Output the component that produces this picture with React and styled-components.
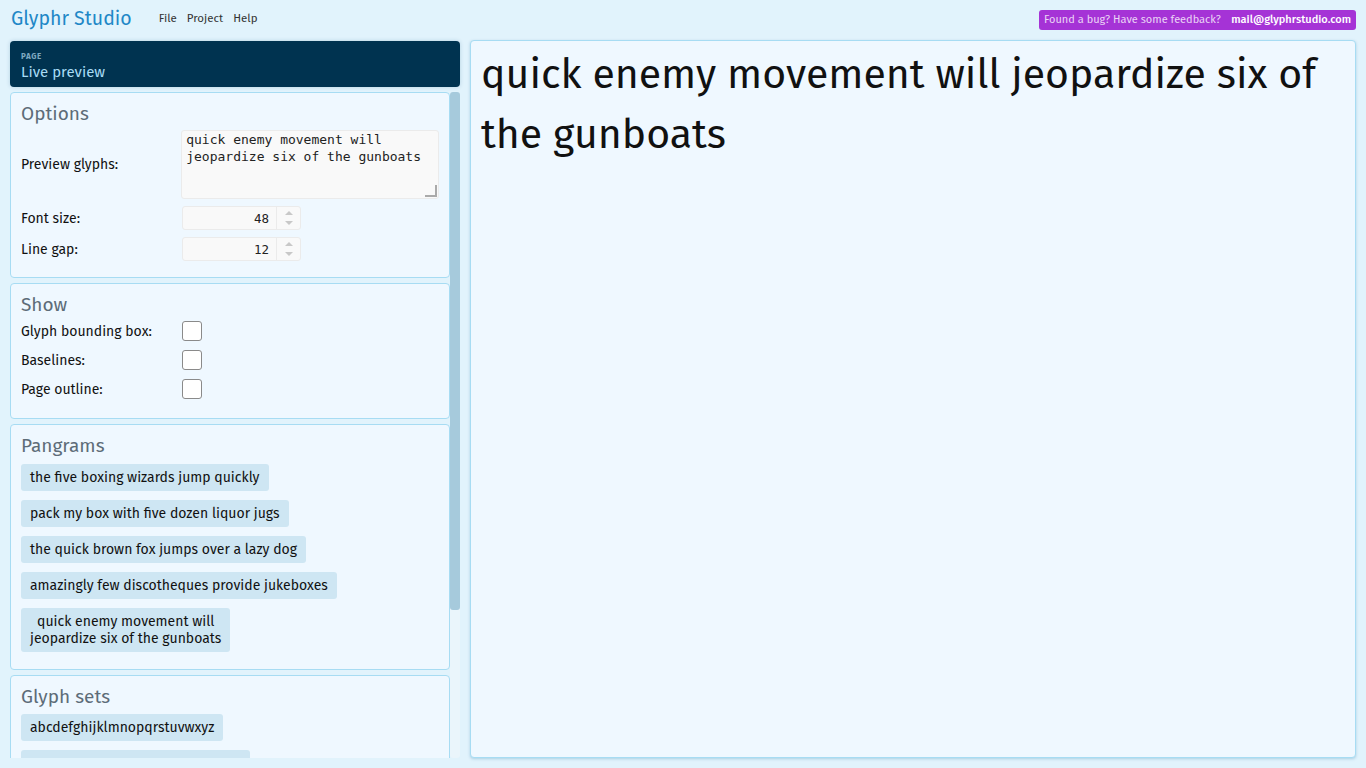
import React from "react";
import styled, { createGlobalStyle } from "styled-components";

const Global = createGlobalStyle`
  html, body { margin: 0; padding: 0; }
  body {
    background: #e1f3fc;
    font-family: "Fira Sans", "Lato", "Noto Sans", sans-serif;
    overflow: hidden;
  }
`;

const Page = styled.div`
  width: 1366px;
  height: 768px;
  display: flex;
  flex-direction: column;
  background: #e1f3fc;
`;

const TopBar = styled.div`
  height: 36px;
  display: flex;
  align-items: center;
  padding: 0 10px 0 11px;
  box-sizing: border-box;
`;

const Logo = styled.div`
  font-size: 19.5px;
  color: #1f88c7;
  margin-right: 27px;
`;

const MenuItem = styled.div`
  font-size: 11.5px;
  color: #333;
  margin-right: 10px;
`;

const Spacer = styled.div`
  flex: 1;
`;

const Feedback = styled.div`
  background: #a533d6;
  color: #ead5f5;
  font-size: 11px;
  line-height: 14px;
  border-radius: 3px;
  padding: 3px 5px;
  display: flex;
  gap: 8px;
  margin-top: 4px;
  width: 307px;
  justify-content: space-between;
`;

const Mail = styled.span`
  color: #fff;
  font-weight: 500;
`;

const Main = styled.div`
  flex: 1;
  display: flex;
  padding: 4px 10px 10px 10px;
  gap: 10px;
  min-height: 0;
`;

const LeftCol = styled.div`
  width: 450px;
  display: flex;
  flex-direction: column;
  gap: 5px;
  min-height: 0;
`;

const PageCard = styled.div`
  background: #003350;
  border-radius: 4px;
  height: 46px;
  box-sizing: border-box;
  padding: 11px 10px 0 11px;
  margin-top: 1px;
  flex-shrink: 0;
  box-shadow: 0 0 4px rgba(0, 80, 120, 0.2);
`;

const PageLabel = styled.div`
  font-size: 8px;
  line-height: 10px;
  font-weight: 700;
  letter-spacing: 0.6px;
  color: #7ea8c0;
`;

const PageTitle = styled.div`
  font-size: 15px;
  line-height: 18px;
  color: #a8dcf5;
  margin-top: 1px;
`;

const ScrollArea = styled.div`
  flex: 1;
  display: flex;
  min-height: 0;
  overflow: hidden;
`;

const Cards = styled.div`
  width: 440px;
  display: flex;
  flex-direction: column;
  gap: 5px;
`;

const Track = styled.div`
  width: 10px;
  background: #eaf5fb;
  border-radius: 3px;
  display: flex;
  flex-direction: column;
`;

const Thumb = styled.div`
  height: 518px;
  background: #a6cadc;
  border-radius: 3px;
`;

const Card = styled.div`
  background: #eff8ff;
  border: 1px solid #a7dcf3;
  border-radius: 4px;
  padding: ${(p) => p.$pt || 9}px 10px ${(p) => p.$pb || 15}px 10px;
  box-sizing: border-box;
  flex-shrink: 0;
`;

const CardTitle = styled.div`
  font-size: 19px;
  line-height: 23px;
  color: #5d6c78;
  margin-bottom: ${(p) => p.$mb || 6}px;
`;

const Row = styled.div`
  display: flex;
  align-items: center;
  margin-bottom: ${(p) => p.$mb || 0}px;
`;

const Label = styled.div`
  width: 161px;
  font-size: 14px;
  color: #111;
`;

const TextArea = styled.div`
  width: 259px;
  height: 69px;
  box-sizing: border-box;
  background: #f9f9f9;
  border: 1px solid #ebebeb;
  border-radius: 3px;
  padding: 0 4px;
  font-family: "DejaVu Sans Mono", monospace;
  font-size: 13px;
  line-height: 17px;
  color: #222;
  position: relative;
`;

const Grip = styled.div`
  position: absolute;
  right: 1px;
  bottom: 1px;
  width: 12px;
  height: 12px;
  border-right: 2px solid #aaa;
  border-bottom: 2px solid #aaa;
  box-sizing: border-box;
`;

const NumberBox = styled.div`
  width: 119px;
  height: 24px;
  box-sizing: border-box;
  background: #f9f9f9;
  border: 1px solid #ebebeb;
  border-radius: 3px;
  display: flex;
`;

const NumberVal = styled.div`
  flex: 1;
  text-align: right;
  padding-right: 7px;
  font-family: "DejaVu Sans Mono", monospace;
  font-size: 12.5px;
  line-height: 23px;
  color: #222;
`;

const Spin = styled.div`
  width: 23px;
  border-left: 1px solid #ebebeb;
  display: flex;
  flex-direction: column;
  align-items: center;
  justify-content: center;
  gap: 6px;
`;

const Tri = styled.div`
  width: 0;
  height: 0;
  border-left: 4px solid transparent;
  border-right: 4px solid transparent;
  ${(p) =>
    p.$up
      ? "border-bottom: 4px solid #c8c8c8;"
      : "border-top: 4px solid #c8c8c8;"}
`;

const Check = styled.div`
  width: 20px;
  height: 20px;
  box-sizing: border-box;
  border: 1px solid #8a8a8a;
  border-radius: 3px;
  background: #fff;
`;

const ChipList = styled.div`
  display: flex;
  flex-direction: column;
  align-items: flex-start;
  gap: 9px;
`;

const Chip = styled.div`
  background: #cee6f3;
  border-radius: 3px;
  padding: 5px 9px;
  font-size: 14px;
  line-height: 17px;
  color: #111;
  text-align: center;
  min-width: ${(p) => p.$minw || 0}px;
`;

const Preview = styled.div`
  flex: 1;
  background: #eff8ff;
  border: 1px solid #a7dcf3;
  border-radius: 4px;
  padding: 4px 10px;
  box-sizing: border-box;
  font-family: "Fira Sans", "Noto Sans", sans-serif;
  font-size: 41px;
  line-height: 60px;
  color: #111;
  box-shadow: 0 1px 3px rgba(0, 100, 150, 0.25);
`;

export default function App() {
  return (
    <Page>
      <Global />
      <TopBar>
        <Logo>Glyphr Studio</Logo>
        <MenuItem>File</MenuItem>
        <MenuItem>Project</MenuItem>
        <MenuItem>Help</MenuItem>
        <Spacer />
        <Feedback>
          <span>Found a bug? Have some feedback?</span>
          <Mail>mail@glyphrstudio.com</Mail>
        </Feedback>
      </TopBar>
      <Main>
        <LeftCol>
          <PageCard>
            <PageLabel>PAGE</PageLabel>
            <PageTitle>Live preview</PageTitle>
          </PageCard>
          <ScrollArea>
            <Cards>
              <Card $pb={16}>
                <CardTitle $mb={5}>Options</CardTitle>
                <Row $mb={7}>
                  <Label>Preview glyphs:</Label>
                  <TextArea>
                    quick enemy movement will jeopardize six of the gunboats
                    <Grip />
                  </TextArea>
                </Row>
                <Row $mb={7}>
                  <Label>Font size:</Label>
                  <NumberBox>
                    <NumberVal>48</NumberVal>
                    <Spin>
                      <Tri $up />
                      <Tri />
                    </Spin>
                  </NumberBox>
                </Row>
                <Row>
                  <Label>Line gap:</Label>
                  <NumberBox>
                    <NumberVal>12</NumberVal>
                    <Spin>
                      <Tri $up />
                      <Tri />
                    </Spin>
                  </NumberBox>
                </Row>
              </Card>
              <Card $pb={19}>
                <CardTitle $mb={5}>Show</CardTitle>
                <Row $mb={9}>
                  <Label>Glyph bounding box:</Label>
                  <Check />
                </Row>
                <Row $mb={9}>
                  <Label>Baselines:</Label>
                  <Check />
                </Row>
                <Row>
                  <Label>Page outline:</Label>
                  <Check />
                </Row>
              </Card>
              <Card $pt={9} $pb={17}>
                <CardTitle $mb={7}>Pangrams</CardTitle>
                <ChipList>
                  <Chip>the five boxing wizards jump quickly</Chip>
                  <Chip>pack my box with five dozen liquor jugs</Chip>
                  <Chip>the quick brown fox jumps over a lazy dog</Chip>
                  <Chip>amazingly few discotheques provide jukeboxes</Chip>
                  <Chip>
                    quick enemy movement will
                    <br />
                    jeopardize six of the gunboats
                  </Chip>
                </ChipList>
              </Card>
              <Card>
                <CardTitle $mb={6}>Glyph sets</CardTitle>
                <ChipList>
                  <Chip>abcdefghijklmnopqrstuvwxyz</Chip>
                  <Chip $minw={211}>ABCDEFGHIJKLMNOPQRSTUVWXYZ</Chip>
                </ChipList>
              </Card>
            </Cards>
            <Track>
              <Thumb />
            </Track>
          </ScrollArea>
        </LeftCol>
        <Preview>quick enemy movement will jeopardize six of the gunboats</Preview>
      </Main>
    </Page>
  );
}
